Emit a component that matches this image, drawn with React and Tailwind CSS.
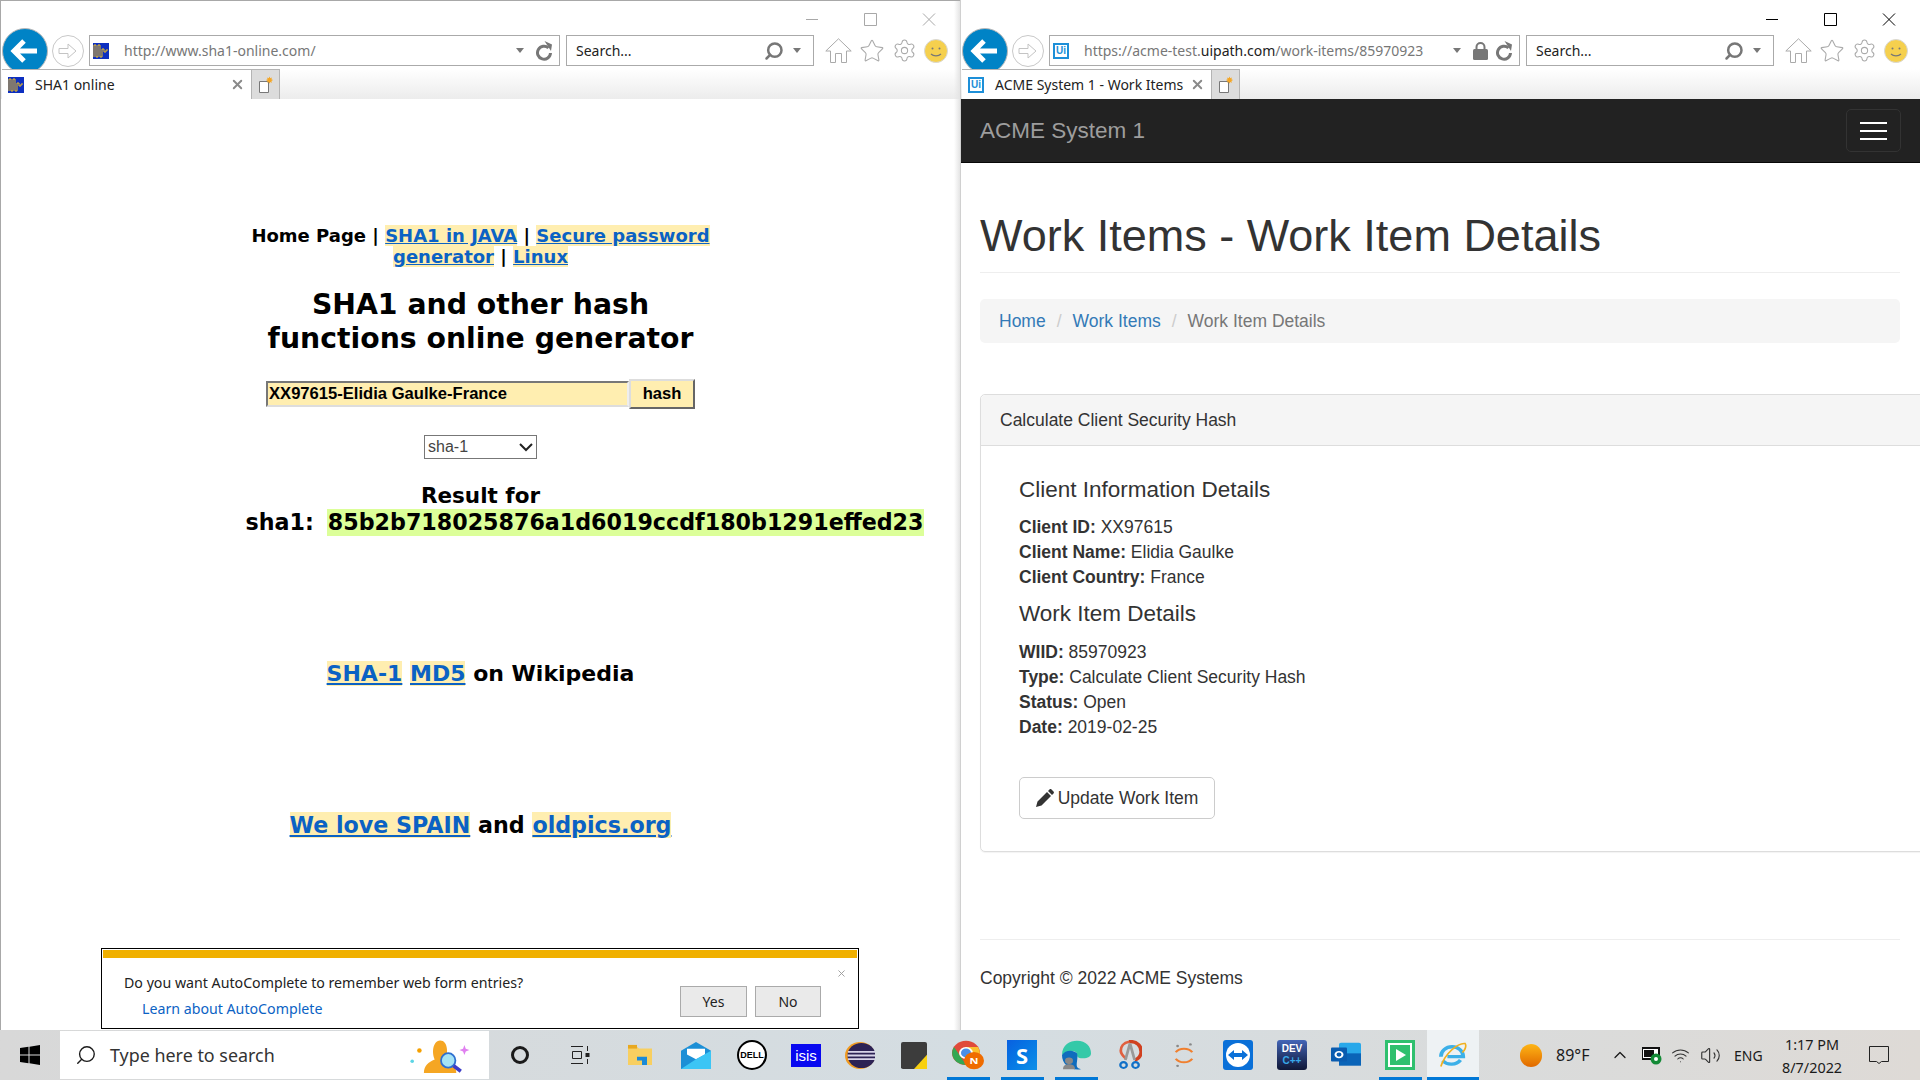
import React from 'react';
import { Star, Settings, Search, ChevronUp, Wifi, Volume2, X } from 'lucide-react';

const chromeFont = "font-['Noto_Sans',sans-serif]";

function BackButton() {
  return (
    <svg width="46" height="46" viewBox="0 0 46 46" className="flex-none">
      <circle cx="23" cy="23" r="22.5" fill="#0083c6" stroke="#b8b8b8" />
      <path d="M12 23h23M22 13L12 23l10 10" fill="none" stroke="#fff" strokeWidth="5" />
    </svg>
  );
}

function ForwardButton() {
  return (
    <svg width="32" height="32" viewBox="0 0 32 32" className="flex-none">
      <circle cx="16" cy="16" r="15.5" fill="#fff" stroke="#c8c8c8" />
      <path d="M7 13.5h9V9l8 7-8 7v-4.500H7z" fill="#fff" stroke="#c4c4c4" />
    </svg>
  );
}

function ShaIcon() {
  return (
    <svg width="16" height="16" viewBox="0 0 16 16" className="flex-none">
      <rect width="16" height="16" fill="#0d2fc0" />
      <path d="M1 14V2h2v12h2V2h2v12h2V6h2v3h2V7h2" fill="none" stroke="#f0c020" strokeWidth="1" />
    </svg>
  );
}

function UiIcon() {
  return (
    <div className="w-4 h-4 flex-none border-2 border-[#1d8fd8] bg-white flex items-center justify-center text-[10px] leading-none font-bold text-[#1d8fd8] font-['Liberation_Sans',sans-serif]">
      Ui
    </div>
  );
}

function NewTabIcon() {
  return (
    <svg width="16" height="18" viewBox="0 0 16 18">
      <path d="M1.500 5.500h9v11h-9z" fill="#fff" stroke="#777" />
      <path d="M11.500 0.500l.8 1.800 1.800-.8-.8 1.800 1.800.8-1.800.8.800 1.800-1.800-.8-.8 1.800-.8-1.800-1.800.8.800-1.800-1.800-.8 1.800-.8-.8-1.800 1.800.8z" fill="#f5a623" />
    </svg>
  );
}

function Smiley() {
  return (
    <svg width="24" height="24" viewBox="0 0 24 24" className="flex-none">
      <circle cx="12" cy="12" r="11.500" fill="#f5d04e" stroke="#d8d8d8" />
      <circle cx="8.500" cy="9.500" r="1" fill="#777" />
      <circle cx="15.500" cy="9.500" r="1" fill="#777" />
      <path d="M7 15c2.500 2.500 7.500 2.500 10 0" fill="none" stroke="#777" strokeWidth="1.200" />
    </svg>
  );
}

function HouseIcon() {
  return (
    <svg width="27" height="25" viewBox="0 0 27 25" className="flex-none" fill="#fff" stroke="#aaa">
      <path d="M.8 13L13.500.8 26.200 13h-4.700v11.500h-5v-9h-6v9h-5V13z" />
    </svg>
  );
}

function ReloadIcon() {
  return (
    <svg width="18" height="20" viewBox="0 0 18 20" className="flex-none ml-[5px] mr-[3px]">
      <path d="M13.500 7A6.500 6.500 0 1 0 15.500 12" fill="none" stroke="#777" strokeWidth="3" />
      <path d="M9.500 0l7.500 3.500-1 6.500z" fill="#777" />
    </svg>
  );
}

function LockIcon() {
  return (
    <svg width="15" height="18" viewBox="0 0 15 18" className="flex-none ml-[12px] mr-[2px]">
      <path d="M3.500 8V5a4 4 0 0 1 8 0v3" fill="none" stroke="#777" strokeWidth="2" />
      <rect y="7" width="15" height="11" rx="1.500" fill="#777" />
    </svg>
  );
}

function Caret() {
  return <div className="w-0 h-0 flex-none border-x-[4px] border-x-transparent border-t-[5px] border-t-[#777]" />;
}

function BrowserChrome({ url, tabTitle, favicon, active, lock }) {
  const ctl = active ? '#000' : '#a8a8a8';
  return (
    <div className={`${chromeFont} flex-none`}>
      <div className="h-[34px] flex justify-end items-center pt-[1px]">
        <svg width="130" height="14" viewBox="0 0 130 14" className="mr-[24px]">
          <path d="M0 7.500h12M58.500 1.500h12v12h-12zM117 1.500l12 12M129 1.500l-12 12" fill="none" stroke={ctl} />
        </svg>
      </div>
      <div className="h-[31px] flex items-center pl-[1px]">
        <BackButton />
        <div className="ml-[4px]"><ForwardButton /></div>
        <div className="ml-[5px] w-[471px] h-[31px] border border-[#aaa] flex items-center pl-[3px] pr-[3px] bg-white">
          {favicon}
          <div className="ml-[15px] flex-1 text-[14px] text-[#777] whitespace-nowrap">{url}</div>
          <Caret />
          {lock ? <LockIcon /> : <div className="w-[6px]" />}
          <ReloadIcon />
        </div>
        <div className="ml-[6px] w-[248px] h-[31px] border border-[#aaa] flex items-center pl-[9px] pr-[12px] text-[14px] text-[#222] bg-white">
          <span className="flex-1">Search...</span>
          <Search size={20} strokeWidth={3} className="text-[#777] -scale-x-100 mr-[9px]" />
          <Caret />
        </div>
        <div className="ml-[11px] flex items-center gap-[7px] text-[#aaa]">
          <HouseIcon />
          <Star size={26} strokeWidth={1} />
          <Settings size={25} strokeWidth={1} />
          <Smiley />
        </div>
      </div>
      <div className="h-[3px]" />
      <div className="h-[30px] flex bg-gradient-to-b from-white to-[#ececec] pl-[1px]">
        <div className="w-[250px] border-t border-r border-[#b4b4b4] bg-white flex items-center pl-[6px] pr-[6px]">
          {favicon}
          <div className="ml-[11px] flex-1 text-[14px] text-[#222] whitespace-nowrap">{tabTitle}</div>
          <X size={15} strokeWidth={3} className="text-[#8a8a8a]" />
        </div>
        <div className="w-[28px] border-t border-r border-[#b4b4b4] bg-[#dcdcdc] flex items-center justify-center">
          <NewTabIcon />
        </div>
      </div>
    </div>
  );
}

function HL({ children }) {
  return <a className="text-[#0b62c4] underline bg-[#ffeeb0]">{children}</a>;
}

function ShaPage() {
  return (
    <div className="relative flex-1 font-['DejaVu_Sans',sans-serif] font-bold text-black">
      <div className="w-[470px] mx-auto pt-[126px] text-center">
        <div className="text-[18px] leading-[21px]">
          Home Page | <HL>SHA1 in JAVA</HL> | <HL>Secure password generator</HL> | <HL>Linux</HL>
        </div>
        <div className="mt-[21px] text-[28.300px] leading-[34px]">SHA1 and other hash functions online generator</div>
      </div>
      <div className="mt-[23px] flex justify-center items-center">
        <input
          readOnly
          value="XX97615-Elidia Gaulke-France"
          className="w-[363px] h-[26px] bg-[#ffeeb0] border-2 border-t-[#777] border-l-[#777] border-r-[#eee] border-b-[#ddd] px-[1px] text-[16.600px] font-bold font-['Liberation_Sans',sans-serif] text-black outline-none"
        />
        <div className="w-[66px] h-[30px] bg-[#ffeeb0] border-2 border-t-[#ddd] border-l-[#ddd] border-r-[#666] border-b-[#666] flex items-center justify-center text-[16.600px] font-['Liberation_Sans',sans-serif]">
          hash
        </div>
      </div>
      <div className="mt-[26px] flex justify-center">
        <div className="w-[113px] h-[24px] border border-[#777] flex items-center justify-between px-[3px] font-normal text-[16px] text-[#444] font-['Liberation_Sans',sans-serif]">
          <span>sha-1</span>
          <svg width="14" height="9" viewBox="0 0 14 9"><path d="M1 1l6 6 6-6" fill="none" stroke="#222" strokeWidth="2" /></svg>
        </div>
      </div>
      <div className="w-[470px] mx-auto mt-[23px]">
        <div className="text-center text-[21.500px] leading-[27px]">Result for</div>
        <div className="text-[22.200px] leading-[27px] whitespace-nowrap">
          sha1:<span className="ml-[13px] inline-block bg-[#dcff99] px-[1px]">85b2b718025876a1d6019ccdf180b1291effed23</span>
        </div>
      </div>
      <div className="mt-[124px] text-center text-[22px] leading-[28px]">
        <HL>SHA-1</HL> <HL>MD5</HL> on Wikipedia
      </div>
      <div className="mt-[123px] text-center text-[22.200px] leading-[28px]">
        <HL>We love SPAIN</HL> and <HL>oldpics.org</HL>
      </div>
      <div className={`${chromeFont} absolute left-[100px] top-[849px] w-[758px] h-[81px] bg-white border border-black font-normal`}>
        <div className="h-[8px] mx-[1px] mt-[1px] bg-[#f0b000]" />
        <X size={11} strokeWidth={2} className="absolute right-[11px] top-[19px] text-[#999]" />
        <div className="pl-[22px] pt-[15px] text-[14.200px] leading-[20px] text-[#222]">Do you want AutoComplete to remember web form entries?</div>
        <div className="pl-[40px] pt-[6px] text-[14.200px] leading-[20px] text-[#0b62c4]">Learn about AutoComplete</div>
        <div className="absolute left-[578px] top-[37px] flex gap-[8px] text-[14px] text-[#222]">
          <div className="w-[67px] h-[31px] bg-[#eaeaea] border border-[#aaa] flex items-center justify-center">Yes</div>
          <div className="w-[66px] h-[31px] bg-[#eaeaea] border border-[#aaa] flex items-center justify-center">No</div>
        </div>
      </div>
    </div>
  );
}

function Row({ label, value }) {
  return <div className="leading-[25px]"><b>{label}</b> {value}</div>;
}

function AcmePage() {
  return (
    <div className="flex-1 min-w-0 overflow-hidden font-['Liberation_Sans',sans-serif] text-[17.5px] text-[#333]">
      <div className="h-[64px] bg-[#222] border-b border-[#080808] flex items-center justify-between pl-[19px] pr-[19px]">
        <div className="text-[22.500px] text-[#9d9d9d]">ACME System 1</div>
        <div className="w-[55px] h-[43px] border border-[#333] rounded-[5px] flex flex-col items-center justify-center gap-[6px]">
          <div className="w-[27px] h-[2px] bg-white" />
          <div className="w-[27px] h-[2px] bg-white" />
          <div className="w-[27px] h-[2px] bg-white" />
        </div>
      </div>
      <div className="pl-[19px] w-[939px]">
        <div className="pt-[48px] pb-[11px] border-b border-[#eee] text-[45px] leading-[50px]">Work Items - Work Item Details</div>
        <div className="mt-[26px] h-[44px] bg-[#f5f5f5] rounded-[5px] flex items-center pl-[19px]">
          <a className="text-[#337ab7]">Home</a>
          <span className="mx-[11px] text-[#ccc]">/</span>
          <a className="text-[#337ab7]">Work Items</a>
          <span className="mx-[11px] text-[#ccc]">/</span>
          <span className="text-[#777]">Work Item Details</span>
        </div>
        <div className="mt-[51px] w-[1000px] border border-[#ddd] rounded-[5px] shadow-[0_1px_1px_rgba(0,0,0,.05)]">
          <div className="h-[51px] bg-[#f5f5f5] border-b border-[#ddd] flex items-center pl-[19px] rounded-t-[5px]">Calculate Client Security Hash</div>
          <div className="pl-[38px] pt-[31px] pb-[32px]">
            <div className="text-[22.500px] leading-[25px]">Client Information Details</div>
            <div className="mt-[13px]">
              <Row label="Client ID:" value="XX97615" />
              <Row label="Client Name:" value="Elidia Gaulke" />
              <Row label="Client Country:" value="France" />
            </div>
            <div className="mt-[11px] text-[22.500px] leading-[25px]">Work Item Details</div>
            <div className="mt-[14px]">
              <Row label="WIID:" value="85970923" />
              <Row label="Type:" value="Calculate Client Security Hash" />
              <Row label="Status:" value="Open" />
              <Row label="Date:" value="2019-02-25" />
            </div>
            <div className="mt-[37px] w-[196px] h-[42px] border border-[#ccc] rounded-[5px] flex items-center justify-center gap-[4px]">
              <svg width="18" height="18" viewBox="0 0 18 18" className="flex-none">
                <path d="M0 18l1.500-5.500L11 3l4 4-9.500 9.500zM12 2l1.500-1.500c.6-.6 1.400-.6 2 0l2 2c.6.6.6 1.400 0 2L16 6z" fill="#333" />
              </svg>
              Update Work Item
            </div>
          </div>
        </div>
        <div className="mt-[87px] border-t border-[#eee] pt-[26px] leading-[25px]">Copyright © 2022 ACME Systems</div>
      </div>
    </div>
  );
}

function Icon({ children, bar }) {
  return (
    <div className="relative w-[54px] h-full flex items-center justify-center flex-none">
      {children}
      {bar && <div className="absolute bottom-0 left-[5.500px] w-[43px] h-[3px] bg-[#0078d7]" />}
    </div>
  );
}

function Taskbar() {
  return (
    <div className={`${chromeFont} h-[50px] flex bg-gradient-to-r from-[#d8d8d8] via-[#d4dde2] to-[#dedad6] text-[#1a1a1a] overflow-hidden`}>
      <div className="w-[60px] flex items-center justify-center">
        <svg width="20" height="20" viewBox="0 0 20 20"><path d="M0 3l8.500-1.200v7.700H0zM9.500 1.700L20 0v9.500H9.500zM0 10.500h8.500v7.700L0 17zM9.500 10.500H20V20L9.500 18.300z" fill="#000" /></svg>
      </div>
      <div className="w-[429px] h-[48px] mt-[1px] bg-white flex items-center pl-[15px]">
        <Search size={22} strokeWidth={1.500} className="-scale-x-100" />
        <div className="ml-[13px] flex-1 text-[17.900px] text-[#333]">Type here to search</div>
        <svg width="70" height="36" viewBox="0 0 70 40" className="mr-[13px]">
          <path d="M16 40c0-8 5-12 12-15-3-6-3-20 6-21 9 0 9 15 6 21 6 3 12 7 12 15z" fill="#f5a623" />
          <circle cx="43" cy="26" r="8" fill="#a5e3f5" stroke="#2e6fd0" strokeWidth="2" />
          <path d="M49 32l8 6" stroke="#3d3dc8" strokeWidth="4" />
          <circle cx="11" cy="15" r="2.500" fill="#f5a000" />
          <circle cx="3" cy="27" r="2" fill="#5cd5e5" />
          <path d="M61 9l1.500 4 4 1.500-4 1.500-1.500 4-1.500-4-4-1.500 4-1.500z" fill="#e080f0" />
        </svg>
      </div>
      <div className="w-[61px] flex items-center justify-center">
        <div className="w-[18px] h-[18px] rounded-full border-[3px] border-[#1a1a1a]" />
      </div>
      <div className="w-[60px] flex items-center justify-center">
        <svg width="20" height="20" viewBox="0 0 20 20" fill="none" stroke="#222"><path d="M1 1.500h12M1 18.500h12M2.500 6.500h9v7h-9zM17.500 1v5M17.500 14v5" /><rect x="16" y="8.500" width="3" height="3" fill="#222" /></svg>
      </div>
      <div className="w-[3px] flex-none" />
      <Icon>
        <svg width="26" height="22" viewBox="0 0 26 24" preserveAspectRatio="none"><path d="M1 3h9l2 2h13v18H1z" fill="#f8cf60" /><path d="M1 1h9v4H1z" fill="#e8a820" /><path d="M10 14h10v9h-5v-5h-5z" fill="#1a8ad8" /></svg>
      </Icon>
      <div className="w-[2px] flex-none" />
      <Icon>
        <svg width="30" height="27" viewBox="0 0 30 28" preserveAspectRatio="none"><path d="M0 9L15 0l15 9v19H0z" fill="#1c8fd6" /><path d="M6 7h18v6l-9 5-9-5z" fill="#fff" /><path d="M0 28L15 18l15-9v19z" fill="#3cc5f5" /></svg>
      </Icon>
      <div className="w-[2px] flex-none" />
      <Icon>
        <div className="w-[30px] h-[30px] rounded-full border-[2px] border-black bg-white flex items-center justify-center text-[9px] font-bold text-black leading-none font-['Liberation_Sans',sans-serif]">DELL</div>
      </Icon>
      <Icon>
        <div className="w-[30px] h-[23px] bg-[#0808f0] flex items-center justify-center text-[15px] text-white leading-none font-['Liberation_Sans',sans-serif]">isis</div>
      </Icon>
      <Icon>
        <svg width="30" height="27" viewBox="0 0 30 30" preserveAspectRatio="none"><circle cx="15" cy="15" r="15" fill="#f09a20" /><circle cx="16.500" cy="15" r="14" fill="#2c2255" /><path d="M3 11h27M2.500 15h28M3 19h27" stroke="#d8d4ea" strokeWidth="2" /></svg>
      </Icon>
      <Icon>
        <svg width="26" height="27" viewBox="0 0 26 32" preserveAspectRatio="none"><rect width="26" height="32" rx="2" fill="#3c3c3c" /><path d="M13 32L26 15v17z" fill="#f8d010" /></svg>
      </Icon>
      <Icon bar>
        <svg width="32" height="31" viewBox="0 0 32 36" preserveAspectRatio="none">
          <circle cx="14" cy="15" r="14" fill="#e04a3a" />
          <path d="M14 29A14 14 0 0 1 2 8l7 12z" fill="#34a853" />
          <path d="M14 29a14 14 0 0 0 12-21H14z" fill="#fbc02d" />
          <circle cx="14" cy="15" r="6" fill="#4a8fe8" stroke="#fff" strokeWidth="2" />
          <circle cx="22" cy="24" r="10" fill="#ef6c00" />
          <text x="22" y="28" textAnchor="middle" fontSize="11" fontWeight="700" fill="#fff">N</text>
        </svg>
      </Icon>
      <Icon bar>
        <div className="w-[30px] h-[30px] bg-gradient-to-br from-[#0a60e0] to-[#1090e8] flex items-center justify-center text-[22px] font-bold text-white leading-none">S</div>
      </Icon>
      <Icon bar>
        <svg width="30" height="30" viewBox="0 0 30 36" preserveAspectRatio="none">
          <path d="M1 18C1 6 9 1 16 1c9 0 14 7 14 15 0 4-3 6-8 6-6 0-6-3-6-5 0-3-4-5-8-3-4 1-6 3-7 4z" fill="#34c9a8" />
          <path d="M1 18c3-6 11-7 15-2 2 8-4 18 4 19C9 37 1 29 1 18z" fill="#0f6cbd" />
          <circle cx="8" cy="25" r="4" fill="#888" />
          <path d="M2 35c0-5 3-6 6-6s6 1 6 6z" fill="#888" />
        </svg>
      </Icon>
      <Icon>
        <svg width="24" height="30" viewBox="0 0 26 36" fill="none" preserveAspectRatio="none">
          <path d="M12 2c8-1 14 5 13 14-1 4-4 7-7 8" stroke="#d0401f" strokeWidth="4" />
          <path d="M12 2C6 3 3 8 3 13c0 4 3 7 6 10" stroke="#e0603f" strokeWidth="3" />
          <path d="M13 4l-5 20M13 4l5 20" stroke="#999" strokeWidth="3" />
          <circle cx="6" cy="30" r="3.500" stroke="#1070c8" strokeWidth="2.500" />
          <circle cx="19" cy="30" r="3.500" stroke="#1070c8" strokeWidth="2.500" />
        </svg>
      </Icon>
      <Icon>
        <svg width="22" height="27" viewBox="0 0 24 34" fill="none" preserveAspectRatio="none">
          <path d="M3 13c4-6 14-6 18 0M3 21c4 6 14 6 18 0" stroke="#f08030" strokeWidth="2.500" />
          <circle cx="5" cy="5" r="1.500" fill="#888" />
          <circle cx="19" cy="3" r="1.500" fill="#888" />
          <circle cx="5" cy="30" r="1.500" fill="#888" />
        </svg>
      </Icon>
      <Icon>
        <svg width="30" height="30" viewBox="0 0 30 30"><rect width="30" height="30" rx="3" fill="#0a70d8" /><circle cx="15" cy="15" r="12" fill="#fff" /><path d="M5 15l6-5v3h8v-3l6 5-6 5v-3h-8v3z" fill="#0a70d8" /></svg>
      </Icon>
      <Icon>
        <div className="w-[30px] h-[30px] rounded-[3px] bg-gradient-to-b from-[#4466b8] to-[#101838] flex flex-col items-center justify-center text-[10px] font-bold text-white leading-[12px] font-['Liberation_Sans',sans-serif]">
          <span>DEV</span><span className="text-[#38a8e8]">C++</span>
        </div>
      </Icon>
      <Icon>
        <svg width="30" height="28" viewBox="0 0 30 34" preserveAspectRatio="none"><rect x="8" y="2" width="22" height="26" rx="2" fill="#28a8ea" /><path d="M8 15h22v15H8z" fill="#0a64b8" /><rect y="8" width="16" height="17" rx="1" fill="#0a5cb0" /><circle cx="8" cy="16.500" r="3.500" fill="none" stroke="#fff" strokeWidth="2" /></svg>
      </Icon>
      <Icon bar>
        <svg width="30" height="30" viewBox="0 0 30 30"><rect width="30" height="30" fill="#2fc06e" /><rect x="3" y="3" width="24" height="24" fill="#fff" /><rect x="5" y="5" width="20" height="20" fill="#2fc06e" /><path d="M11 9l10 6-10 6z" fill="#fff" /></svg>
      </Icon>
      <div className="relative w-[52px] flex-none bg-[#eef2f4] flex items-center justify-center">
        <svg width="28" height="28" viewBox="0 0 30 34" fill="none" preserveAspectRatio="none">
          <path d="M2 19a12 12 0 0 1 24 0H9" stroke="#3cb0e8" strokeWidth="4" />
          <path d="M23 23A12 12 0 0 1 4 24" stroke="#3cb0e8" strokeWidth="4" />
          <path d="M2 31C6 16 20 2 28 3c2 4-1 9-3 11" stroke="#f0b020" strokeWidth="1.800" />
        </svg>
        <div className="absolute bottom-0 inset-x-0 h-[3px] bg-[#0078d7]" />
      </div>
      <div className="w-[41px] flex-none" />
      <div className="w-[22px] h-[23px] rounded-full bg-gradient-to-b from-[#fdb515] to-[#e06800] self-center flex-none" />
      <div className="ml-[14px] text-[16px] self-center w-[50px] whitespace-nowrap">89°F</div>
      <ChevronUp size={20} strokeWidth={1.500} className="self-center ml-[4px]" />
      <svg width="20" height="20" viewBox="0 0 20 20" className="self-center ml-[12px]">
        <rect x="0" y="3" width="17" height="11" fill="#fff" stroke="#111" strokeWidth="2" />
        <rect x="2" y="5" width="10" height="7" fill="#111" />
        <circle cx="14" cy="14" r="5.500" fill="#138a36" />
        <circle cx="14" cy="14" r="2" fill="#fff" />
      </svg>
      <Wifi size={19} strokeWidth={1.300} className="self-center ml-[9px] text-[#333]" />
      <Volume2 size={21} strokeWidth={1.300} className="self-center ml-[10px] text-[#333]" />
      <div className="ml-[13px] text-[14px] self-center w-[34px]">ENG</div>
      <div className="ml-[14px] mt-[1px] w-[60px] text-center text-[14.400px] leading-[23px] self-center whitespace-nowrap">
        <div>1:17 PM</div>
        <div>8/7/2022</div>
      </div>
      <svg width="20" height="20" viewBox="0 0 20 20" className="self-center ml-[27px]" fill="none" stroke="#222">
        <path d="M.5 1.500h19v15h-7l-2.500 2-2.500-2h-7z" />
      </svg>
    </div>
  );
}

export default function App() {
  return (
    <div className="w-[1920px] h-[1080px] overflow-hidden flex flex-col bg-white">
      <div className="h-[1030px] flex flex-none">
        <div className="relative w-[960px] flex flex-col border-t border-l border-[#a8a8a8]">
          <BrowserChrome url="http://www.sha1-online.com/" tabTitle="SHA1 online" favicon={<ShaIcon />} />
          <ShaPage />
          <div className="absolute right-0 inset-y-0 w-[6px] bg-gradient-to-r from-transparent to-[#e4e4e4]" />
        </div>
        <div className="relative w-[960px] flex flex-col border-l border-[#d0d0d0] pt-[1px]">
          <BrowserChrome
            active
            lock
            url={<span>https://acme-test.<span className="text-[#222]">uipath.com</span>/work-items/85970923</span>}
            tabTitle="ACME System 1 - Work Items"
            favicon={<UiIcon />}
          />
          <AcmePage />
        </div>
      </div>
      <Taskbar />
    </div>
  );
}
